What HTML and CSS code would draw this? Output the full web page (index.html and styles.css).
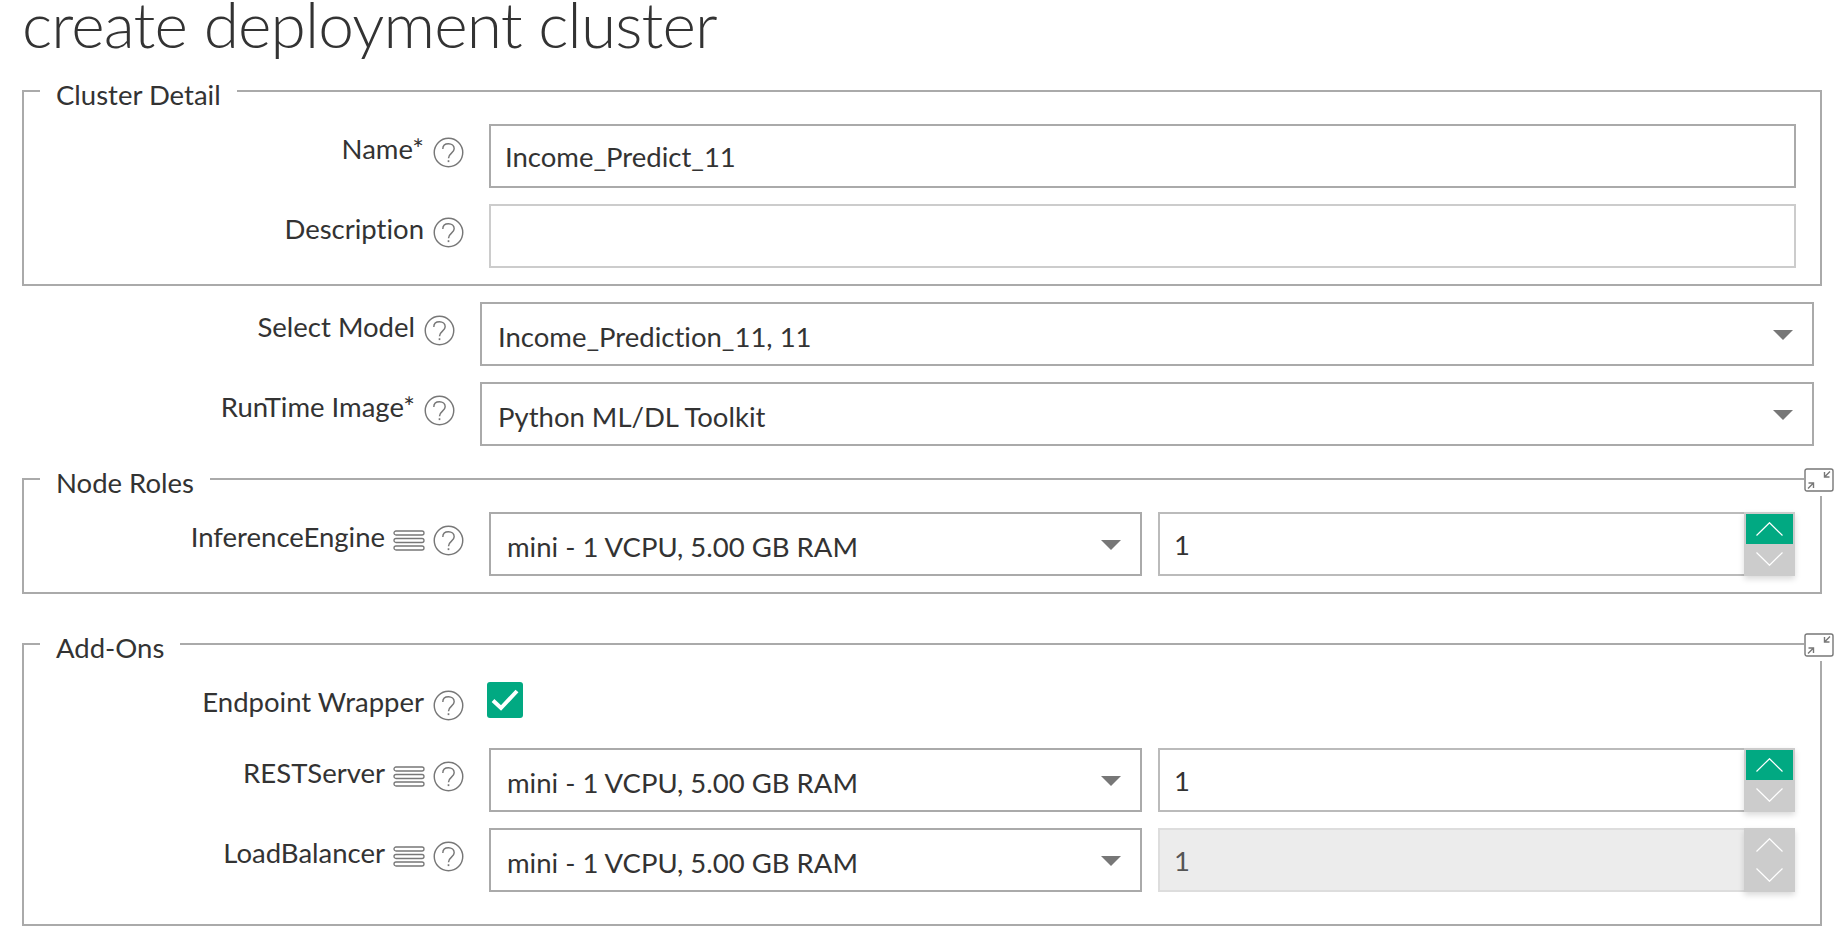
FILE: index.html
```html
<!DOCTYPE html>
<html lang="en">

<head>
    <meta charset="UTF-8">
    <title>create deployment cluster</title>
    <link rel="stylesheet" href="styles.css">
</head>

<body>
    <svg class="defs" width="0" height="0">
        <symbol id="help" viewBox="0 0 30 30">
            <circle cx="15" cy="15" r="13.8" fill="none" stroke="#777" stroke-width="1.4"/>
            <path d="M9.5 11.5c0-3.2 2.4-5 5.5-5s5.500 1.900 5.500 4.800c0 4.200-5.500 4.400-5.500 9.200" fill="none" stroke="#777" stroke-width="1.4"/>
            <rect x="14.200" y="22.500" width="1.600" height="1.800" fill="#777"/>
        </symbol>
        <symbol id="menu" viewBox="0 0 32 21">
            <rect x="1" y="1" width="30" height="4" rx="2" fill="none" stroke="#777" stroke-width="1.300"/>
            <rect x="1" y="8.500" width="30" height="4" rx="2" fill="none" stroke="#777" stroke-width="1.300"/>
            <rect x="1" y="16" width="30" height="4" rx="2" fill="none" stroke="#777" stroke-width="1.300"/>
        </symbol>
        <symbol id="collapse" viewBox="0 0 30 24">
            <rect x="1" y="1" width="28" height="22" rx="2" fill="#fff" stroke="#777" stroke-width="1.400"/>
            <path d="M26 3.500l-5 5M20.500 4v5h5" fill="none" stroke="#777" stroke-width="1.400"/>
            <path d="M4 20.500l5-5M9.500 20v-5h-5" fill="none" stroke="#777" stroke-width="1.400"/>
        </symbol>
        <symbol id="up" viewBox="0 0 27 14">
            <path d="M0.500 13.500L13.500 0.700L26.500 13.500" fill="none" stroke="#fff" stroke-width="1.200"/>
        </symbol>
        <symbol id="down" viewBox="0 0 27 14">
            <path d="M0.500 0.500L13.500 13.300L26.500 0.500" fill="none" stroke="#fff" stroke-width="1.200"/>
        </symbol>
    </svg>

    <h1 class="title">create deployment cluster</h1>

    <fieldset class="group">
        <legend>Cluster Detail</legend>
        <div class="row">
            <label class="row-label"><span class="label-text">Name*</span><svg class="help"><use href="#help"/></svg></label>
            <input class="field" type="text" value="Income_Predict_11">
        </div>
        <div class="row">
            <label class="row-label"><span class="label-text">Description</span><svg class="help"><use href="#help"/></svg></label>
            <input class="field field-empty" type="text">
        </div>
    </fieldset>

    <div class="top-rows">
        <div class="row">
            <label class="row-label"><span class="label-text">Select Model</span><svg class="help"><use href="#help"/></svg></label>
            <div class="select-wrap">
                <select class="select select-wide"><option>Income_Prediction_11, 11</option></select>
            </div>
        </div>
        <div class="row">
            <label class="row-label"><span class="label-text">RunTime Image*</span><svg class="help"><use href="#help"/></svg></label>
            <div class="select-wrap">
                <select class="select select-wide"><option>Python ML/DL Toolkit</option></select>
            </div>
        </div>
    </div>

    <fieldset class="group group-roles">
        <legend>Node Roles</legend>
        <svg class="collapse"><use href="#collapse"/></svg>
        <div class="row">
            <label class="row-label"><span class="label-text">InferenceEngine</span><svg class="menu"><use href="#menu"/></svg><svg class="help"><use href="#help"/></svg></label>
            <div class="select-wrap size">
                <select class="select"><option>mini - 1 VCPU, 5.00 GB RAM</option></select>
            </div>
            <div class="number">
                <input class="number-input" type="text" value="1">
                <div class="spinner">
                    <span class="spin spin-on"><svg class="chevron"><use href="#up"/></svg></span>
                    <span class="spin"><svg class="chevron"><use href="#down"/></svg></span>
                </div>
            </div>
        </div>
    </fieldset>

    <fieldset class="group group-addons">
        <legend>Add-Ons</legend>
        <svg class="collapse"><use href="#collapse"/></svg>
        <div class="row row-check">
            <label class="row-label"><span class="label-text">Endpoint Wrapper</span><svg class="help"><use href="#help"/></svg></label>
            <span class="checkbox">
                <svg width="36" height="36" viewBox="0 0 36 36"><path d="M6 18.500L14 26L30 9" fill="none" stroke="#fff" stroke-width="4"/></svg>
            </span>
        </div>
        <div class="row">
            <label class="row-label"><span class="label-text">RESTServer</span><svg class="menu"><use href="#menu"/></svg><svg class="help"><use href="#help"/></svg></label>
            <div class="select-wrap size">
                <select class="select"><option>mini - 1 VCPU, 5.00 GB RAM</option></select>
            </div>
            <div class="number">
                <input class="number-input" type="text" value="1">
                <div class="spinner">
                    <span class="spin spin-on"><svg class="chevron"><use href="#up"/></svg></span>
                    <span class="spin"><svg class="chevron"><use href="#down"/></svg></span>
                </div>
            </div>
        </div>
        <div class="row">
            <label class="row-label"><span class="label-text">LoadBalancer</span><svg class="menu"><use href="#menu"/></svg><svg class="help"><use href="#help"/></svg></label>
            <div class="select-wrap size">
                <select class="select"><option>mini - 1 VCPU, 5.00 GB RAM</option></select>
            </div>
            <div class="number number-disabled">
                <input class="number-input" type="text" value="1" disabled>
                <div class="spinner">
                    <span class="spin"><svg class="chevron"><use href="#up"/></svg></span>
                    <span class="spin"><svg class="chevron"><use href="#down"/></svg></span>
                </div>
            </div>
        </div>
    </fieldset>
</body>

</html>
```

FILE: styles.css
```css
body {
    font-family: "Lato", "Open Sans", sans-serif;
    font-variant-ligatures: none;
    margin: 0;
    padding: 0 24px 0 22px;
    background-color: #fff;
    color: #333;
    font-size: 27.5px;
    overflow: hidden;
}

.defs {
    position: absolute;
}

.title {
    margin: 0;
    height: 70px;
    font-size: 64px;
    letter-spacing: -0.85px;
    line-height: 48px;
    font-weight: 300;
}

.group {
    position: relative;
    margin: 0;
    padding: 0 0 16px 0;
    border: 2px solid #aaa;
    min-width: 0;
}

.group legend {
    margin-left: 16px;
    padding: 10px 16px 2px;
    line-height: 30px;
}

.row {
    display: flex;
    align-items: flex-start;
    margin-bottom: 16px;
}

.group .row:first-of-type {
    margin-top: 12px;
}

.group .row:last-child {
    margin-bottom: 0;
}

.row-label {
    display: flex;
    align-items: center;
    justify-content: flex-end;
    box-sizing: border-box;
    flex: none;
    width: 440px;
    height: 56px;
    margin-right: 25px;
    white-space: nowrap;
}

.label-text {
    margin-bottom: 8px;
}

.help {
    width: 31px;
    height: 31px;
    margin-left: 9px;
    flex: none;
}

.menu {
    width: 32px;
    height: 21px;
    margin-left: 8px;
    flex: none;
}

.menu + .help {
    margin-left: 8px;
}

.field {
    box-sizing: border-box;
    width: 1307px;
    height: 64px;
    padding: 0 14px;
    border: 2px solid #aaa;
    font: inherit;
    font-variant-ligatures: none;
    color: #333;
    outline: none;
}

.field-empty {
    border-color: #ccc;
}

.top-rows {
    margin-top: 16px;
    margin-bottom: 12px;
}

.top-rows .row-label {
    width: 433px;
}

.top-rows .row:last-child {
    margin-bottom: 0;
}

.select-wrap {
    position: relative;
}

.select-wrap::after {
    content: "";
    position: absolute;
    top: 28px;
    right: 21px;
    border-left: 10px solid transparent;
    border-right: 10px solid transparent;
    border-top: 10px solid #777;
}

.select {
    display: block;
    box-sizing: border-box;
    width: 653px;
    height: 64px;
    padding: 4px 40px 0 16px;
    border: 2px solid #aaa;
    border-radius: 0;
    background-color: #fff;
    font: inherit;
    font-variant-ligatures: none;
    color: #333;
    appearance: none;
    outline: none;
}

.select-wide {
    width: 1334px;
}

.size {
    margin-right: 16px;
}

.number {
    display: flex;
    width: 637px;
    height: 64px;
}

.number-input {
    box-sizing: border-box;
    flex: 1;
    min-width: 0;
    padding: 0 14px;
    border: 2px solid #bbb;
    font: inherit;
    color: #333;
    outline: none;
}

.number-disabled .number-input {
    border-color: #ddd;
    background-color: #ececec;
    color: #555;
}

.spinner {
    display: flex;
    flex-direction: column;
    flex: none;
    box-sizing: border-box;
    width: 51px;
    height: 64px;
    margin-left: -2px;
    border: 2px solid #ccc;
    background-color: #ccc;
    box-shadow: 0 3px 6px rgba(0, 0, 0, 0.15);
}

.spin {
    display: flex;
    align-items: center;
    justify-content: center;
    flex: 1;
}

.spin-on {
    background-color: #01a982;
}

.chevron {
    width: 27px;
    height: 14px;
}

.group-roles {
    padding-bottom: 16px;
}

.group-addons {
    margin-top: 29px;
    padding-bottom: 32px;
}

.group-addons .row-check {
    margin-top: 9px;
    margin-bottom: 15px;
}

.checkbox {
    display: block;
    width: 36px;
    height: 36px;
    margin: 5px 0 0 -2px;
    border-radius: 3px;
    background-color: #01a982;
}

.collapse {
    position: absolute;
    top: -32px;
    right: -14px;
    width: 30px;
    height: 24px;
    padding: 0 0 4px 0;
    background-color: #fff;
}
```
